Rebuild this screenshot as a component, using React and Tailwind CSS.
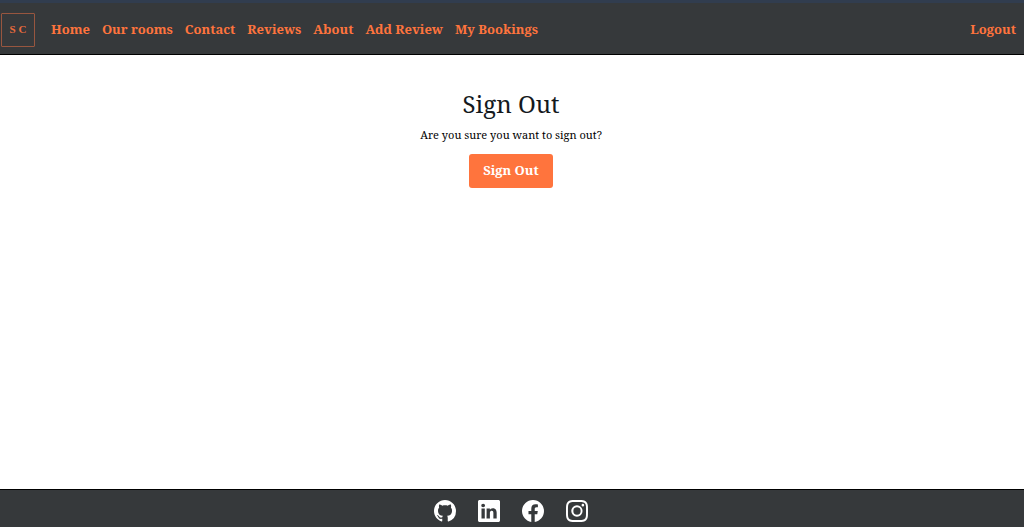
import React from "react";
import { BsGithub, BsLinkedin, BsFacebook, BsInstagram } from "react-icons/bs";

const links = ["Home", "Our rooms", "Contact", "Reviews", "About", "Add Review", "My Bookings"];

const socials = [
  { name: "GitHub", Icon: BsGithub },
  { name: "LinkedIn", Icon: BsLinkedin },
  { name: "Facebook", Icon: BsFacebook },
  { name: "Instagram", Icon: BsInstagram },
];

export default function App() {
  return (
    <div className="flex min-h-screen flex-col bg-white font-['Noto_Serif','DejaVu_Serif_Condensed','DejaVu_Serif',serif] text-[#14191d]">
      <header className="border-t-3 border-b border-t-[#313d4f] border-b-black bg-[#36393b]">
        <nav className="flex h-[51px] items-center pt-[2px] pr-2 pl-px text-[13px] font-bold text-[#ff743d]">
          <a
            href="#home"
            aria-label="SC home"
            className="mr-4 flex size-[34px] items-center justify-center gap-[3px] rounded-[1px] border border-[#98563f] font-['Liberation_Serif',serif] text-[11px] text-[#e96b3b]"
          >
            <span>S</span>
            <span>C</span>
          </a>
          <ul className="flex items-center gap-3">
            {links.map((label) => (
              <li key={label}>
                <a href="#" className="whitespace-nowrap">{label}</a>
              </li>
            ))}
          </ul>
          <a href="#logout" className="ml-auto">Logout</a>
        </nav>
      </header>

      <main className="flex flex-1 flex-col items-center pt-[31px] pr-[2px]">
        <h1 className="text-2xl leading-9">Sign Out</h1>
        <p className="mt-[5px] text-[11px] leading-4 text-black">Are you sure you want to sign out?</p>
        <form className="mt-[11px]" onSubmit={(e) => e.preventDefault()}>
          <button type="submit" className="h-[34px] rounded-[3px] bg-[#ff743d] px-[14px] text-[13px] font-bold text-white">
            Sign Out
          </button>
        </form>
      </main>

      <footer className="border-t border-black bg-[#36393b] pr-[2px]">
        <ul className="flex h-[37px] items-center justify-center gap-[22px] pt-[5px] text-white">
          {socials.map(({ name, Icon }) => (
            <li key={name}>
              <a href="#" aria-label={name} className="block">
                <Icon className="size-[22px]" />
              </a>
            </li>
          ))}
        </ul>
      </footer>
    </div>
  );
}
